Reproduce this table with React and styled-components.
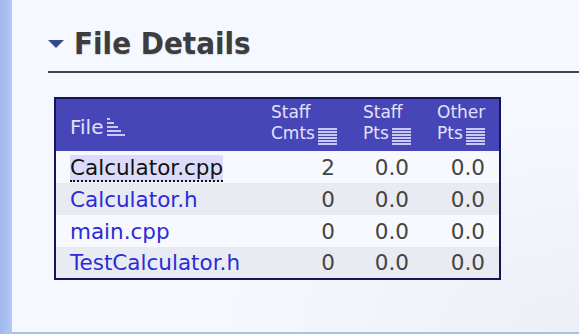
import React from 'react';
import styled, { createGlobalStyle } from 'styled-components';

const GlobalStyle = createGlobalStyle`
  html, body {
    margin: 0;
    padding: 0;
    background: #f5f8fe;
  }
  body {
    font-family: "DejaVu Sans", "Liberation Sans", sans-serif;
  }
`;

const files = [
  { name: 'Calculator.cpp', cmts: '2', staff: '0.0', other: '0.0', active: true },
  { name: 'Calculator.h', cmts: '0', staff: '0.0', other: '0.0' },
  { name: 'main.cpp', cmts: '0', staff: '0.0', other: '0.0' },
  { name: 'TestCalculator.h', cmts: '0', staff: '0.0', other: '0.0' },
];

const SortedIcon = () => (
  <SortSvg width="18" height="19" viewBox="0 0 18 19">
    <rect x="0" y="0" width="3" height="2" />
    <rect x="0" y="4" width="7" height="2" />
    <rect x="0" y="8" width="11" height="2" />
    <rect x="0" y="12" width="14" height="2" />
    <rect x="0" y="16" width="18" height="2" />
  </SortSvg>
);

const UnsortedIcon = () => (
  <UnsortSvg width="19" height="18" viewBox="0 0 19 18">
    {[0, 3, 6, 9, 12, 15].map((y) => (
      <rect key={y} x="0" y={y} width="19" height="2" />
    ))}
  </UnsortSvg>
);

const App = () => {
  return (
    <>
      <GlobalStyle />
      <Page>
        <SideStrip />
        <Main>
          <Heading>
            <Caret />
            <Title>File Details</Title>
          </Heading>

          <Table>
            <colgroup>
              <col />
              <col style={{ width: 92 }} />
              <col style={{ width: 74 }} />
              <col style={{ width: 77 }} />
            </colgroup>
            <thead>
              <tr>
                <FileHead>
                  File
                  <SortedIcon />
                </FileHead>
                <NumHead>
                  Staff
                  <br />
                  Cmts
                  <UnsortedIcon />
                </NumHead>
                <NumHead>
                  Staff
                  <br />
                  Pts
                  <UnsortedIcon />
                </NumHead>
                <NumHead>
                  Other
                  <br />
                  Pts
                  <UnsortedIcon />
                </NumHead>
              </tr>
            </thead>
            <tbody>
              {files.map((f, i) => (
                <Row key={f.name} $alt={i % 2 === 1}>
                  <NameCell>
                    <FileLink $active={f.active}>{f.name}</FileLink>
                  </NameCell>
                  <NumCell>{f.cmts}</NumCell>
                  <NumCell>{f.staff}</NumCell>
                  <NumCell>{f.other}</NumCell>
                </Row>
              ))}
            </tbody>
          </Table>
        </Main>
      </Page>
    </>
  );
};

export default App;

const Page = styled.div`
  display: flex;
  height: 334px;
  width: 579px;
  overflow: hidden;
`;

const SideStrip = styled.div`
  width: 12px;
  flex-shrink: 0;
  background: linear-gradient(to right, #9fb7ee, #b3c7f5);
`;

const Main = styled.div`
  flex: 1;
  box-sizing: border-box;
  padding: 25px 0 0 36px;
  background: radial-gradient(ellipse at 100% 100%, #eceff5 0%, #f5f8fe 45%);
  border-bottom: 2px solid #a9bdec;
`;

const Heading = styled.div`
  display: flex;
  align-items: center;
  gap: 10px;
  padding-bottom: 10px;
  border-bottom: 2px solid #454545;
`;

const Caret = styled.span`
  width: 0;
  height: 0;
  border-left: 8px solid transparent;
  border-right: 8px solid transparent;
  border-top: 8px solid #34478c;
  margin-top: 2px;
`;

const Title = styled.h2`
  margin: 0;
  font-family: "DejaVu Sans Condensed", "DejaVu Sans", sans-serif;
  font-stretch: condensed;
  font-size: 31px;
  font-weight: bold;
  line-height: 36px;
  color: #3d3d3d;
  text-shadow: 0 1px 1px rgba(0, 0, 0, 0.15);
`;

const Table = styled.table`
  margin: 24px 0 0 6px;
  width: 447px;
  table-layout: fixed;
  border-collapse: collapse;
  border: 2px solid #15155a;
`;

const HeadCell = styled.th`
  background: #4646b9;
  color: #e2e2f7;
  font-weight: normal;
  height: 51px;
  padding: 0 14px;
  vertical-align: middle;
  box-sizing: border-box;
  white-space: nowrap;
  text-align: left;
`;

const FileHead = styled(HeadCell)`
  font-size: 20px;
  line-height: 21px;
  padding-top: 4px;
`;

const NumHead = styled(HeadCell)`
  font-size: 17px;
  line-height: 21px;
  padding-top: 3px;
  padding-bottom: 5px;
`;

const SortSvg = styled.svg`
  fill: #c9c9f1;
  margin-left: 4px;
  vertical-align: -3px;
`;

const UnsortSvg = styled.svg`
  fill: #c9c9f1;
  margin-left: 3px;
  vertical-align: -7px;
`;

const Row = styled.tr`
  background: ${(p) => (p.$alt ? '#e9ebf2' : '#f7f9fe')};
  height: 32px;
`;

const Cell = styled.td`
  font-size: 21.5px;
  padding: 0 14px;
  vertical-align: middle;
  white-space: nowrap;
`;

const NameCell = styled(Cell)`
  text-align: left;
`;

const NumCell = styled(Cell)`
  text-align: right;
  color: #444;
`;

const FileLink = styled.span`
  color: ${(p) => (p.$active ? '#111' : '#2b2bd8')};
  background: ${(p) => (p.$active ? '#dcdcfa' : 'transparent')};
  border-bottom: ${(p) => (p.$active ? '2px dotted #111' : 'none')};
`;
